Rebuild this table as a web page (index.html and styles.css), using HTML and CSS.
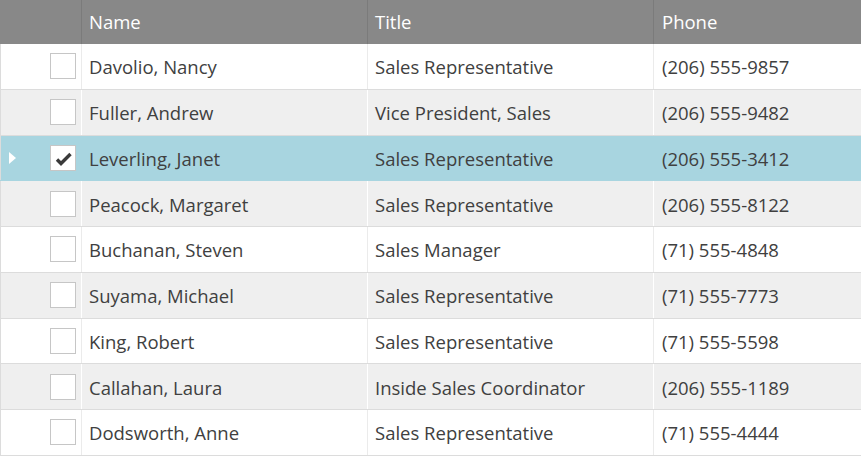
FILE: index.html
```html
<!DOCTYPE html>
<html>
<head>
<meta charset="utf-8">
<link rel="stylesheet" href="styles.css">
</head>
<body>
<div class="grid">
  <div class="row head">
    <div class="cell sel"></div>
    <div class="cell">Name</div>
    <div class="cell">Title</div>
    <div class="cell last">Phone</div>
  </div>
  <div class="row">
    <div class="cell sel"><span class="box"></span></div>
    <div class="cell">Davolio, Nancy</div>
    <div class="cell">Sales Representative</div>
    <div class="cell last">(206) 555-9857</div>
  </div>
  <div class="row alt">
    <div class="cell sel"><span class="box"></span></div>
    <div class="cell">Fuller, Andrew</div>
    <div class="cell">Vice President, Sales</div>
    <div class="cell last">(206) 555-9482</div>
  </div>
  <div class="row current">
    <div class="cell sel"><span class="arrow"></span><span class="box"><svg viewBox="0 0 26 26" width="26" height="26"><path d="M7 14.5 L11 18.5 L20.5 9" fill="none" stroke="#3a3a3a" stroke-width="3.4" stroke-linecap="butt" stroke-linejoin="miter"/></svg></span></div>
    <div class="cell">Leverling, Janet</div>
    <div class="cell">Sales Representative</div>
    <div class="cell last">(206) 555-3412</div>
  </div>
  <div class="row alt">
    <div class="cell sel"><span class="box"></span></div>
    <div class="cell">Peacock, Margaret</div>
    <div class="cell">Sales Representative</div>
    <div class="cell last">(206) 555-8122</div>
  </div>
  <div class="row">
    <div class="cell sel"><span class="box"></span></div>
    <div class="cell">Buchanan, Steven</div>
    <div class="cell">Sales Manager</div>
    <div class="cell last">(71) 555-4848</div>
  </div>
  <div class="row alt">
    <div class="cell sel"><span class="box"></span></div>
    <div class="cell">Suyama, Michael</div>
    <div class="cell">Sales Representative</div>
    <div class="cell last">(71) 555-7773</div>
  </div>
  <div class="row">
    <div class="cell sel"><span class="box"></span></div>
    <div class="cell">King, Robert</div>
    <div class="cell">Sales Representative</div>
    <div class="cell last">(71) 555-5598</div>
  </div>
  <div class="row alt">
    <div class="cell sel"><span class="box"></span></div>
    <div class="cell">Callahan, Laura</div>
    <div class="cell">Inside Sales Coordinator</div>
    <div class="cell last">(206) 555-1189</div>
  </div>
  <div class="row">
    <div class="cell sel"><span class="box"></span></div>
    <div class="cell">Dodsworth, Anne</div>
    <div class="cell">Sales Representative</div>
    <div class="cell last">(71) 555-4444</div>
  </div>
</div>
</body>
</html>
```
FILE: styles.css
```css
html, body {
  margin: 0;
  padding: 0;
  background: #ffffff;
}
body {
  width: 861px;
  height: 456px;
  overflow: hidden;
  font-family: "Open Sans", "Noto Sans", sans-serif;
  font-size: 18.5px;
  color: #404040;
}
.grid {
  display: flex;
  flex-direction: column;
}
.row {
  display: grid;
  grid-template-columns: 82px 286px 286px 207px;
  height: 45.75px;
  box-sizing: border-box;
  border-bottom: 1px solid #dcdcdc;
  background: #ffffff;
}
.row.alt {
  background: #efefef;
}
.row.current {
  background: #a8d5e0;
  border-bottom-color: #a8d5e0;
}
.row.head {
  height: 44px;
  background: #888888;
  color: #ffffff;
  border-bottom: none;
}
.cell {
  display: flex;
  align-items: center;
  padding: 1px 7px 0;
  border-right: 1px solid #ebebeb;
  white-space: nowrap;
  overflow: hidden;
}
.cell.last {
  padding-left: 8px;
}
.row.alt .cell {
  border-right-color: #ffffff;
}
.row.current .cell {
  border-right-color: #a8d5e0;
}
.row.head .cell {
  border-right-color: #7b7b7b;
  padding-top: 0;
  padding-bottom: 2px;
}
.cell.last {
  border-right: none;
}
.cell.sel {
  position: relative;
  padding: 0;
  border-left: 1px solid #dcdcdc;
}
.row.head .cell.sel {
  border-left: none;
}
.box {
  position: absolute;
  left: 49px;
  top: 50%;
  margin-top: -13px;
  width: 26px;
  height: 26px;
  box-sizing: border-box;
  border: 1px solid #c6c6c6;
  background: #ffffff;
}
.box svg {
  display: block;
  margin: -1px;
}
.arrow {
  position: absolute;
  left: 8px;
  top: 50%;
  margin-top: -6px;
  width: 0;
  height: 0;
  border-top: 6px solid transparent;
  border-bottom: 6px solid transparent;
  border-left: 7px solid #ffffff;
}
```
